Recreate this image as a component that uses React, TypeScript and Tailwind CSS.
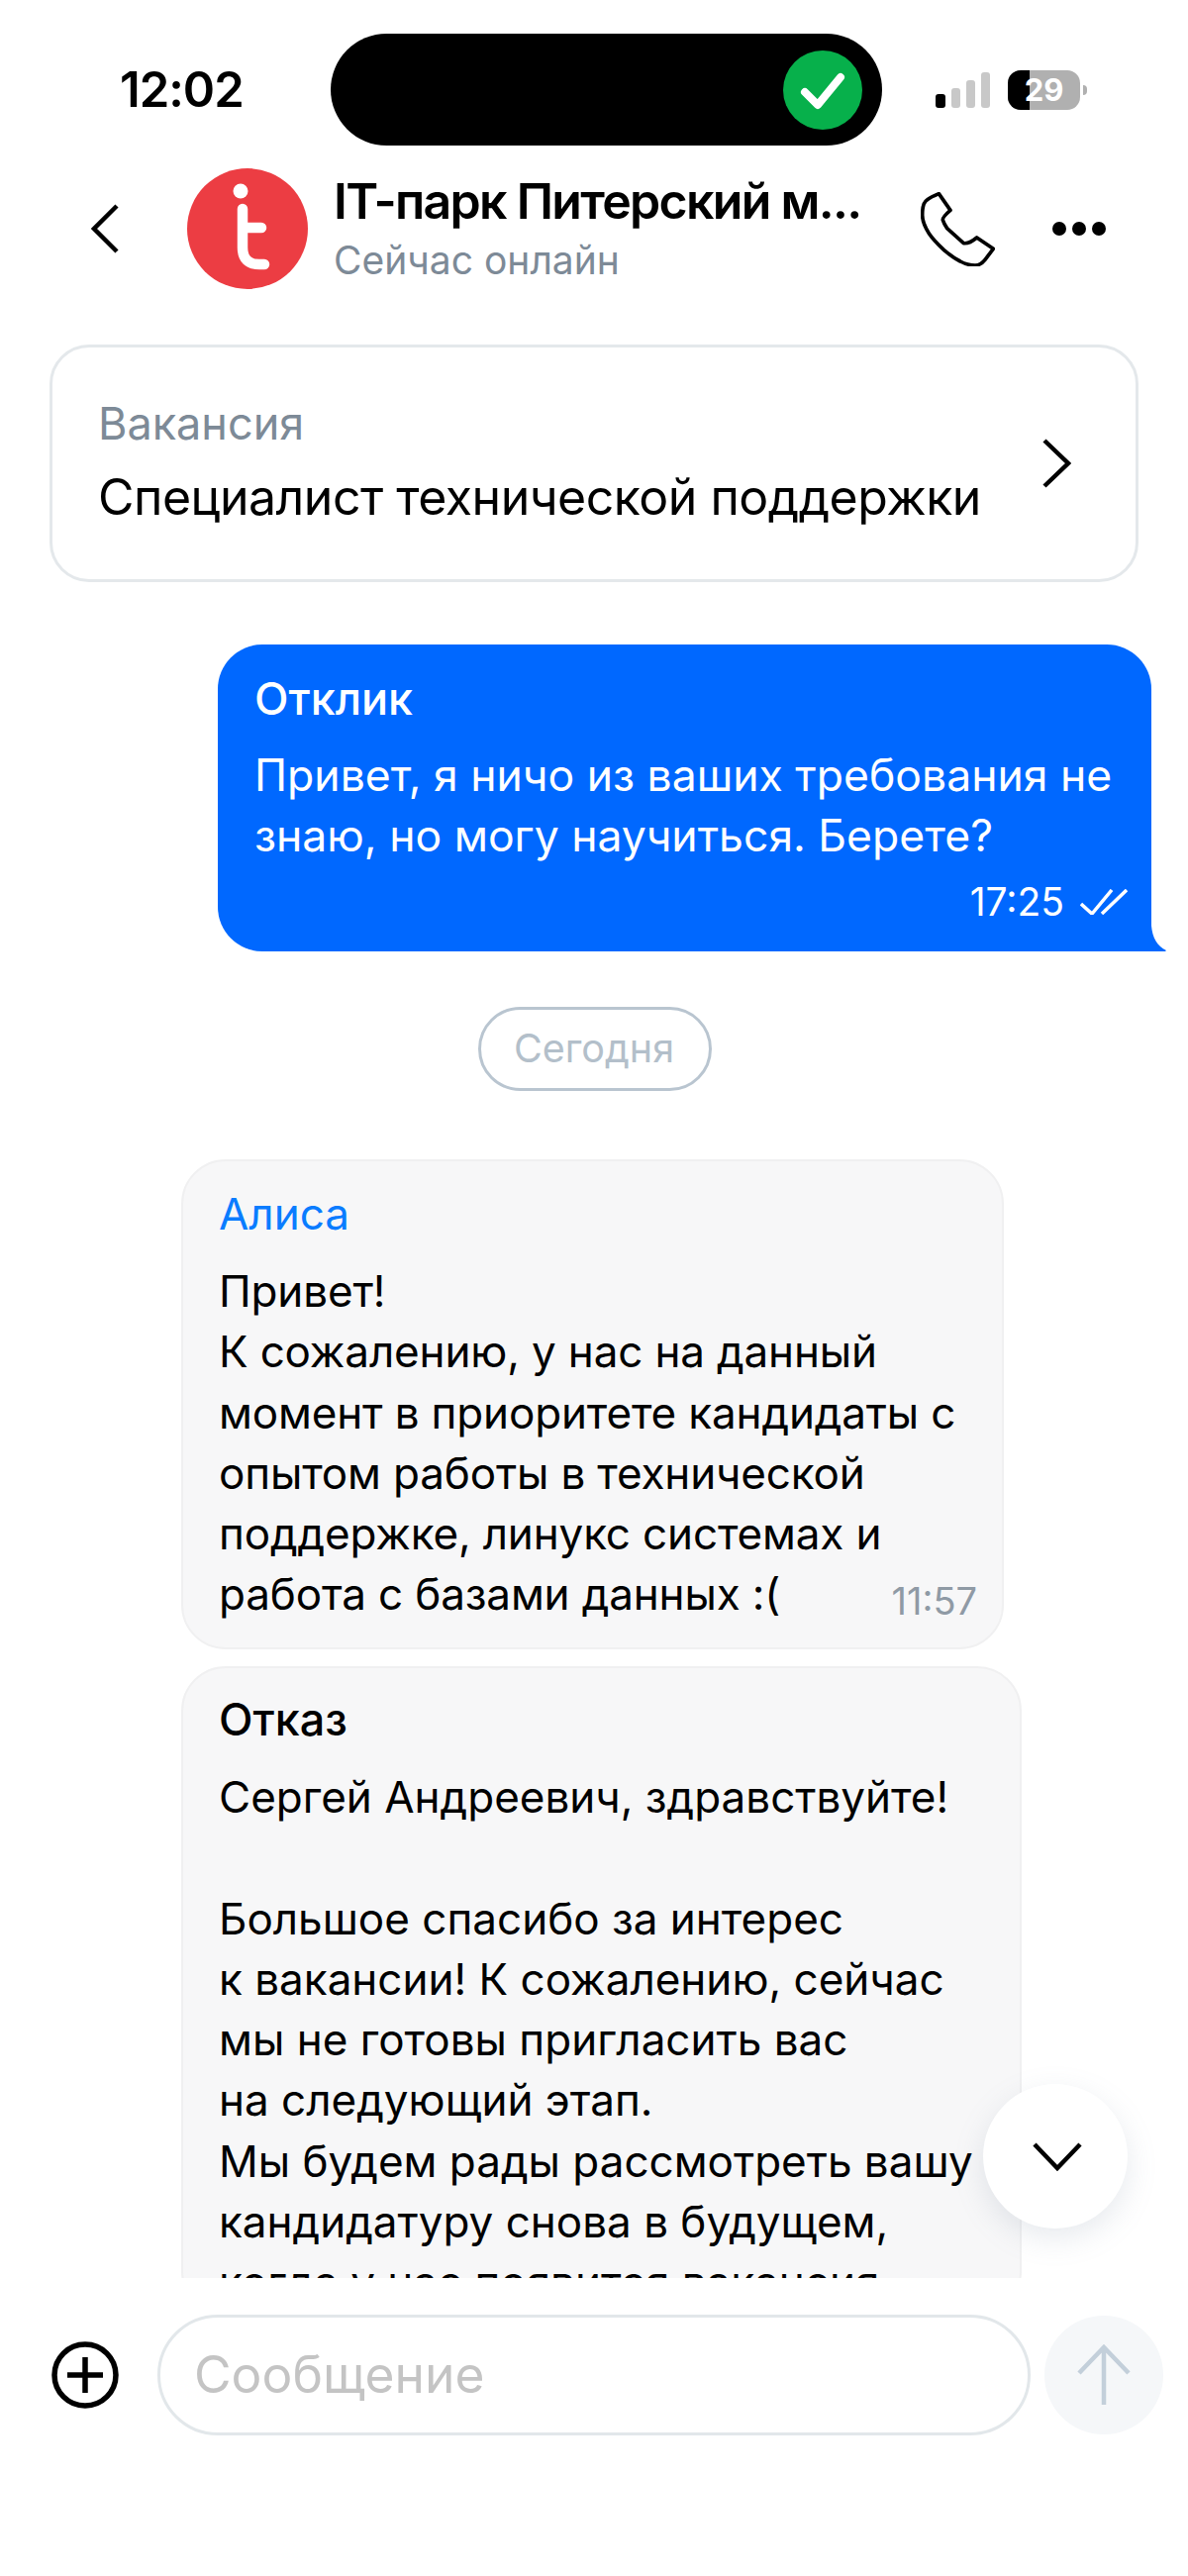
const font = "font-['Inter','Liberation_Sans',sans-serif]"

function StatusBar() {
	return (
		<div className="mt-[34px] flex h-[113px] items-center pl-[121px]">
			<span className="w-[213px] text-[49px] font-semibold leading-none tracking-[-1px] text-black">12:02</span>
			<div className="flex h-[113px] w-[557px] items-center justify-end rounded-full bg-black pr-[20px]">
				<svg width="80" height="80" viewBox="0 0 80 80">
					<circle cx="40" cy="40" r="40" fill="#07b04b" />
					<path d="M22 42 L35 55 L58 27" fill="none" stroke="white" strokeWidth="8" strokeLinecap="round" strokeLinejoin="round" />
				</svg>
			</div>
			<div className="ml-[54px] flex items-end gap-[6px] self-center">
				<div className="h-[14px] w-[10px] rounded-[3px] bg-black" />
				<div className="h-[20px] w-[9px] rounded-[3px] bg-[#c8c8c8]" />
				<div className="h-[28px] w-[9px] rounded-[3px] bg-[#c8c8c8]" />
				<div className="h-[36px] w-[9px] rounded-[3px] bg-[#c8c8c8]" />
			</div>
			<div className="relative ml-[18px] flex h-[40px] w-[73px] items-center justify-center overflow-hidden rounded-[13px] bg-[#b0b0b0]">
				<div className="absolute left-0 top-0 h-full w-[22px] bg-black" />
				<span className="relative text-[31px] font-bold leading-none text-white">29</span>
			</div>
			<div className="ml-[3px] h-[10px] w-[4px] rounded-r-full bg-[#b0b0b0]" />
		</div>
	)
}

function Header() {
	return (
		<div className="mt-[23px] flex h-[122px] shrink-0 items-center pl-[92px]">
			<svg width="28" height="50" viewBox="0 0 28 50" fill="none" stroke="black" strokeWidth="4.5">
				<path d="M26 2 L3 25 L26 48" />
			</svg>
			<svg className="ml-[69px]" width="122" height="122" viewBox="0 0 122 122">
				<circle cx="61" cy="61" r="61" fill="#ec3d43" />
				<circle cx="54" cy="23" r="7.5" fill="white" />
				<path d="M56 41 V80 Q56 97 73 97 H78 M56 60 H75" fill="none" stroke="white" strokeWidth="10.5" strokeLinecap="round" />
			</svg>
			<div className="ml-[26px] flex w-[560px] flex-col">
				<span className="-mt-[5px] text-[50px] font-semibold leading-[60px] tracking-[-1.7px] text-black">IT-парк Питерский м...</span>
				<span className="mt-[8px] text-[39px] leading-[44px] text-[#7d8a97]">Сейчас онлайн</span>
			</div>
			<svg className="ml-[33px]" width="75" height="75" viewBox="30 40 225 225" fill="none" stroke="black" strokeWidth="11" strokeLinejoin="round">
				<path d="M85 45 L120 95 C105 108 95 118 97 125 C100 135 105 143 110 150 L160 195 C172 197 188 188 200 178 L250 212 L225 245 C215 258 205 262 195 262 C180 262 165 258 150 250 C130 240 115 228 100 215 C82 198 66 182 55 165 C42 145 35 128 35 110 C35 98 36 85 40 75 C44 66 50 60 85 45 Z" />
			</svg>
			<div className="ml-[58px] flex gap-[6px]">
				<div className="size-[14px] rounded-full bg-black" />
				<div className="size-[14px] rounded-full bg-black" />
				<div className="size-[14px] rounded-full bg-black" />
			</div>
		</div>
	)
}

function VacancyCard() {
	return (
		<div className="ml-[50px] flex h-[240px] w-[1100px] items-center justify-between rounded-[40px] border-[3px] border-[#e4e8eb] pl-[46px] pr-[65px]">
			<div className="flex flex-col">
				<span className="-mt-[3px] text-[45px] leading-[50px] text-[#7d8a97]">Вакансия</span>
				<span className="mt-[21px] text-[50px] leading-[56px] tracking-[-0.5px] text-black">Специалист технической поддержки</span>
			</div>
			<svg width="30" height="50" viewBox="0 0 30 50" fill="none" stroke="black" strokeWidth="4.5">
				<path d="M3 2 L27 25 L3 48" />
			</svg>
		</div>
	)
}

function OutgoingBubble() {
	return (
		<div className="relative ml-[220px] mt-[63px] h-[310px] w-[943px] rounded-[45px] rounded-br-none bg-[#0068ff] pl-[37px] pt-[30px] text-white">
			<div className="text-[45px] font-medium leading-[50px]">Отклик</div>
			<div className="mt-[22px] text-[44.5px] leading-[61px]">
				Привет, я ничо из ваших требования не
				<br />
				знаю, но могу научиться. Берете?
			</div>
			<div className="absolute bottom-[28px] right-[24px] flex items-center gap-[16px]">
				<span className="text-[39px] leading-[44px]">17:25</span>
				<svg width="48" height="26" viewBox="0 0 48 26" fill="none" stroke="white" strokeWidth="3.5">
					<path d="M1 15 L12 25 L32 1 M22 25 L47 1" />
				</svg>
			</div>
			<svg className="absolute bottom-0 left-full" width="15" height="26" viewBox="0 0 15 26">
				<path d="M0 0 C1 12 6 21 15 25 L14 26 H0 Z" fill="#0068ff" />
			</svg>
		</div>
	)
}

function IncomingAlice() {
	return (
		<div className="relative ml-[183px] mt-[69px] h-[495px] w-[831px] rounded-[45px] border-[2px] border-[#f0f0f1] bg-[#f7f7f8] pl-[36px] pt-[25px]">
			<div className="text-[44px] leading-[56px] text-[#0a7cff]">Алиса</div>
			<div className="mt-[20px] text-[44px] leading-[61.3px] tracking-[-0.15px] text-black">
				Привет!
				<br />
				К сожалению, у нас на данный
				<br />
				момент в приоритете кандидаты с
				<br />
				опытом работы в технической
				<br />
				поддержке, линукс системах и
				<br />
				работа с базами данных :(
			</div>
			<span className="absolute bottom-[25px] right-[25px] text-[38px] leading-[44px] text-[#8f9aa5]">11:57</span>
		</div>
	)
}

function IncomingRejection() {
	return (
		<div className="ml-[183px] mt-[17px] w-[849px] rounded-[45px] border-[2px] border-[#f0f0f1] bg-[#f7f7f8] pl-[36px] pt-[27px]">
			<div className="text-[45px] font-medium leading-[50px] text-black">Отказ</div>
			<div className="mt-[23px] text-[44px] leading-[61.3px] text-black">
				Сергей Андреевич, здравствуйте!
				<br />
				<br />
				Большое спасибо за интерес
				<br />
				к вакансии! К сожалению, сейчас
				<br />
				мы не готовы пригласить вас
				<br />
				на следующий этап.
				<br />
				Мы будем рады рассмотреть вашу
				<br />
				кандидатуру снова в будущем,
				<br />
				когда у нас появится вакансия
			</div>
		</div>
	)
}

function Composer() {
	return (
		<div className="flex shrink-0 items-center pl-[52px] pt-[37px]">
			<svg width="68" height="68" viewBox="0 0 68 68" fill="none" stroke="black" strokeWidth="5.5">
				<circle cx="34" cy="34" r="31" />
				<path d="M34 16 V52 M16 34 H52" />
			</svg>
			<div className="ml-[39px] flex h-[122px] w-[882px] items-center rounded-full border-[3px] border-[#e2e7ea] pl-[34px]">
				<span className="text-[51.5px] text-[#c4c4c4]">Сообщение</span>
			</div>
			<div className="ml-[14px] flex size-[120px] items-center justify-center rounded-full bg-[#f5f7f9]">
				<svg width="56" height="64" viewBox="0 0 56 64" fill="none" stroke="#c3cfda" strokeWidth="4.5">
					<path d="M28 62 V4 M3 30 L28 4 L53 30" />
				</svg>
			</div>
		</div>
	)
}

export default function App() {
	return (
		<div className={`flex h-[2602px] w-[1200px] flex-col overflow-hidden bg-white ${font}`}>
			<StatusBar />
			<Header />
			<div className="relative h-[2009px] shrink-0 overflow-hidden pt-[56px]">
				<VacancyCard />
				<OutgoingBubble />
				<div className="ml-[483px] mt-[56px] flex h-[85px] w-[236px] items-center justify-center rounded-full border-[3px] border-[#b9c5d0] pr-[2px] text-[39.5px] text-[#b3bfca]">
					Сегодня
				</div>
				<IncomingAlice />
				<IncomingRejection />
				<button
					type="button"
					className="absolute left-[993px] top-[1813px] flex size-[146px] items-center justify-center rounded-full bg-white pl-[3px] shadow-[0_10px_30px_rgba(120,140,160,0.18)]"
				>
					<svg width="50" height="30" viewBox="0 0 50 30" fill="none" stroke="black" strokeWidth="4.5">
						<path d="M2 3 L25 27 L48 3" />
					</svg>
				</button>
			</div>
			<Composer />
		</div>
	)
}
